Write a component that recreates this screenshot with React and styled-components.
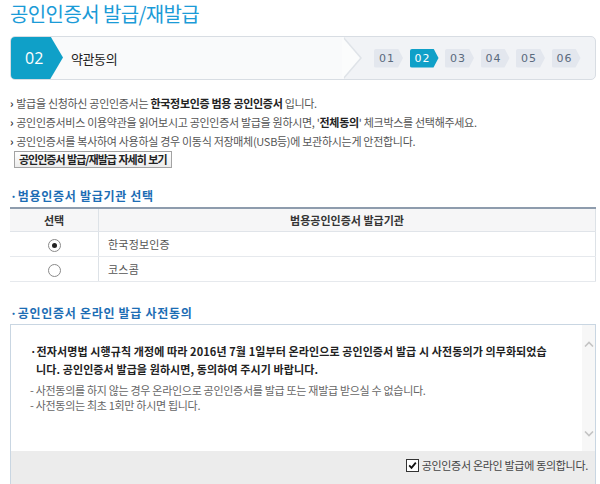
import React from 'react';
import styled, { createGlobalStyle } from 'styled-components';

const GlobalStyle = createGlobalStyle`
    html, body {
        margin: 0;
        padding: 0;
        background: #ffffff;
        overflow: hidden;
    }
    body {
        font-family: 'Noto Sans CJK KR', 'Noto Sans', sans-serif;
        color: #555;
    }
`;

const Page = styled.div`
    width: 586px;
    margin-left: 10px;
`;

const Title = styled.h1`
    margin: 0;
    height: 30px;
    line-height: 28px;
    font-size: 20px;
    font-weight: 400;
    letter-spacing: -0.6px;
    color: #1b9bd7;
`;

const StepBar = styled.div`
    margin-top: 6px;
    height: 42px;
    display: flex;
    align-items: center;
    border: 1px solid #d8dde3;
    border-radius: 5px;
    background: #f1f3f6;
    overflow: hidden;
`;

const CurrentStep = styled.div`
    position: relative;
    flex: none;
    width: 333px;
    height: 100%;
    display: flex;
    align-items: center;
    background: #f9fafb;

    &::before,
    &::after {
        content: '';
        position: absolute;
        top: 0;
        width: 18px;
        height: 100%;
        clip-path: polygon(0 0, 100% 50%, 0 100%);
    }
    &::before {
        right: -18px;
        background: #dfe3e8;
    }
    &::after {
        right: -16px;
        background: #fbfcfc;
    }
`;

const Badge = styled.div`
    flex: none;
    width: 53px;
    height: 44px;
    margin: -1px 0 0 -1px;
    display: flex;
    align-items: center;
    padding-left: 15px;
    box-sizing: border-box;
    background: #0fa0c8;
    color: #fff;
    font-family: 'Open Sans', 'Noto Sans', sans-serif;
    font-size: 16px;
    clip-path: polygon(0 0, 40px 0, 100% 50%, 40px 100%, 0 100%);
    border-radius: 5px 0 0 5px;
`;

const StepName = styled.span`
    margin-left: 8px;
    font-size: 13px;
    letter-spacing: -0.4px;
    color: #222;
`;

const StepList = styled.div`
    display: flex;
    gap: 6.5px;
    margin-left: 30px;
`;

const Pill = styled.span`
    width: 29px;
    height: 19px;
    padding-left: 5px;
    box-sizing: border-box;
    display: flex;
    align-items: center;
    font-family: 'DejaVu Sans', sans-serif;
    font-size: 11px;
    letter-spacing: 1px;
    background: ${p => (p.$active ? '#0fa0c8' : '#e3e7ee')};
    color: ${p => (p.$active ? '#ffffff' : '#5a6a7d')};
    clip-path: polygon(0 0, 24px 0, 100% 50%, 24px 100%, 0 100%);
    border-radius: 2px 0 0 2px;
`;

const Notes = styled.ul`
    list-style: none;
    margin: 14px 0 0 0;
    padding: 0;
`;

const Note = styled.li`
    height: 19px;
    line-height: 19px;
    font-size: 11px;
    letter-spacing: -0.3px;
    color: #555;
    white-space: nowrap;

    &::before {
        content: '›';
        color: #333;
        margin-right: 3px;
        font-weight: 700;
    }

    b {
        color: #222;
    }
`;

const DetailButton = styled.button`
    display: block;
    margin: 0 0 0 4px;
    height: 17px;
    padding: 0 4px;
    border: 1px solid #a3a3a3;
    border-radius: 0;
    background: linear-gradient(#ffffff, #ececec);
    font-family: 'Noto Sans CJK KR', sans-serif;
    font-size: 11px;
    font-weight: 700;
    letter-spacing: -1px;
    word-spacing: 1px;
    line-height: 15px;
    color: #222;
`;

const SectionTitle = styled.h2`
    margin: ${p => p.$top}px 0 3px 0;
    height: 16px;
    line-height: 16px;
    font-size: 12px;
    font-weight: 700;
    letter-spacing: 0.7px;
    color: #1c6db4;

    &::before {
        content: '·';
        margin-right: 0;
    }
`;

const Table = styled.table`
    width: 100%;
    border-collapse: collapse;
    border-top: 2px solid #8e9cad;
    border-right: 1px solid #dde2e7;
    font-size: 11px;
`;

const Th = styled.th`
    height: 22px;
    padding: 0;
    background: #f6f6f7;
    border-bottom: 1px solid #e0e4e9;
    border-left: ${p => (p.$divider ? '1px solid #dde2e7' : 'none')};
    font-weight: 700;
    letter-spacing: 0;
    color: #333;
    width: ${p => p.$w || 'auto'};
`;

const Td = styled.td`
    height: 24px;
    padding: 0 0 0 ${p => (p.$center ? 0 : 9)}px;
    border-bottom: 1px solid #e6e9ed;
    border-left: ${p => (p.$divider ? '1px solid #dde2e7' : 'none')};
    text-align: ${p => (p.$center ? 'center' : 'left')};
    color: #555;
    letter-spacing: 0.2px;
    vertical-align: middle;
`;

const Radio = styled.span`
    display: inline-block;
    width: 11px;
    height: 11px;
    border: 1px solid #8a8a8a;
    border-radius: 50%;
    background: #fff;
    position: relative;
    vertical-align: middle;

    &::after {
        content: '';
        display: ${p => (p.$checked ? 'block' : 'none')};
        position: absolute;
        left: 3px;
        top: 3px;
        width: 5px;
        height: 5px;
        border-radius: 50%;
        background: #222;
    }
`;

const Panel = styled.div`
    border: 1px solid #c9d6e2;
    border-bottom: none;
`;

const ScrollArea = styled.div`
    height: 126px;
    display: flex;
    background: #fff;
`;

const AgreeText = styled.div`
    flex: 1;
    padding: 17px 0 0 19px;
`;

const Lead = styled.p`
    margin: 0 0 5px 0;
    padding-left: 6px;
    text-indent: -6px;
    font-size: 11px;
    font-weight: 700;
    line-height: 18px;
    letter-spacing: 0.1px;
    color: #222;
    white-space: nowrap;
`;

const Sub = styled.p`
    margin: 0;
    font-size: 11px;
    line-height: 15px;
    letter-spacing: -0.3px;
    color: #666;
    white-space: nowrap;
`;

const ScrollTrack = styled.div`
    flex: none;
    width: 13px;
    background: #f7f7f7;
    display: flex;
    flex-direction: column;
    justify-content: space-between;
    align-items: center;
    padding: 16px 0 14px;
    box-sizing: border-box;
`;

const Footer = styled.div`
    height: 40px;
    background: #ececec;
    display: flex;
    justify-content: flex-end;
    align-items: flex-start;
    padding: 6px 7px 0 0;
    box-sizing: border-box;
`;

const AgreeLabel = styled.label`
    display: flex;
    align-items: center;
    gap: 3px;
    font-size: 11px;
    letter-spacing: -0.3px;
    color: #444;
`;

const CheckBox = styled.span`
    width: 11px;
    height: 11px;
    border: 1px solid #333;
    background: #fff;
    display: flex;
    align-items: center;
    justify-content: center;
`;

function Chevron({ up }) {
    return (
        <svg width="10" height="6" viewBox="0 0 10 6">
            <path
                d={up ? 'M1 5.5 L5 1.5 L9 5.5' : 'M1 0.5 L5 4.5 L9 0.5'}
                fill="none"
                stroke="#c4c4c4"
                strokeWidth="1.6"
            />
        </svg>
    );
}

const steps = ['01', '02', '03', '04', '05', '06'];

const issuers = [
    { name: '한국정보인증', checked: true },
    { name: '코스콤', checked: false },
];

function App() {
    return (
        <Page>
            <GlobalStyle />
            <Title>공인인증서 발급/재발급</Title>

            <StepBar>
                <CurrentStep>
                    <Badge>02</Badge>
                    <StepName>약관동의</StepName>
                </CurrentStep>
                <StepList>
                    {steps.map(s => (
                        <Pill key={s} $active={s === '02'}>{s}</Pill>
                    ))}
                </StepList>
            </StepBar>

            <Notes>
                <Note>발급을 신청하신 공인인증서는 <b>한국정보인증 범용 공인인증서</b> 입니다.</Note>
                <Note>공인인증서비스 이용약관을 읽어보시고 공인인증서 발급을 원하시면, '<b>전체동의</b>' 체크박스를 선택해주세요.</Note>
                <Note>공인인증서를 복사하여 사용하실 경우 이동식 저장매체(USB등)에 보관하시는게 안전합니다.</Note>
            </Notes>
            <DetailButton>공인인증서 발급/재발급 자세히 보기</DetailButton>

            <SectionTitle $top={20}>범용인증서 발급기관 선택</SectionTitle>
            <Table>
                <thead>
                    <tr>
                        <Th $w="88px">선택</Th>
                        <Th $divider>범용공인인증서 발급기관</Th>
                    </tr>
                </thead>
                <tbody>
                    {issuers.map(i => (
                        <tr key={i.name}>
                            <Td $center><Radio $checked={i.checked} /></Td>
                            <Td $divider>{i.name}</Td>
                        </tr>
                    ))}
                </tbody>
            </Table>

            <SectionTitle $top={23}>공인인증서 온라인 발급 사전동의</SectionTitle>
            <Panel>
                <ScrollArea>
                    <AgreeText>
                        <Lead>
                            ·전자서명법 시행규칙 개정에 따라 2016년 7월 1일부터 온라인으로 공인인증서 발급 시 사전동의가 의무화되었습
                            <br />
                            니다. 공인인증서 발급을 원하시면, 동의하여 주시기 바랍니다.
                        </Lead>
                        <Sub>- 사전동의를 하지 않는 경우 온라인으로 공인인증서를 발급 또는 재발급 받으실 수 없습니다.</Sub>
                        <Sub>- 사전동의는 최초 1회만 하시면 됩니다.</Sub>
                    </AgreeText>
                    <ScrollTrack>
                        <Chevron up />
                        <Chevron />
                    </ScrollTrack>
                </ScrollArea>
                <Footer>
                    <AgreeLabel>
                        <CheckBox>
                            <svg width="9" height="9" viewBox="0 0 9 9">
                                <path d="M1.2 4.4 L3.5 6.8 L7.8 1.6" fill="none" stroke="#111" strokeWidth="1.8" />
                            </svg>
                        </CheckBox>
                        공인인증서 온라인 발급에 동의합니다.
                    </AgreeLabel>
                </Footer>
            </Panel>
        </Page>
    );
}

export default App;
